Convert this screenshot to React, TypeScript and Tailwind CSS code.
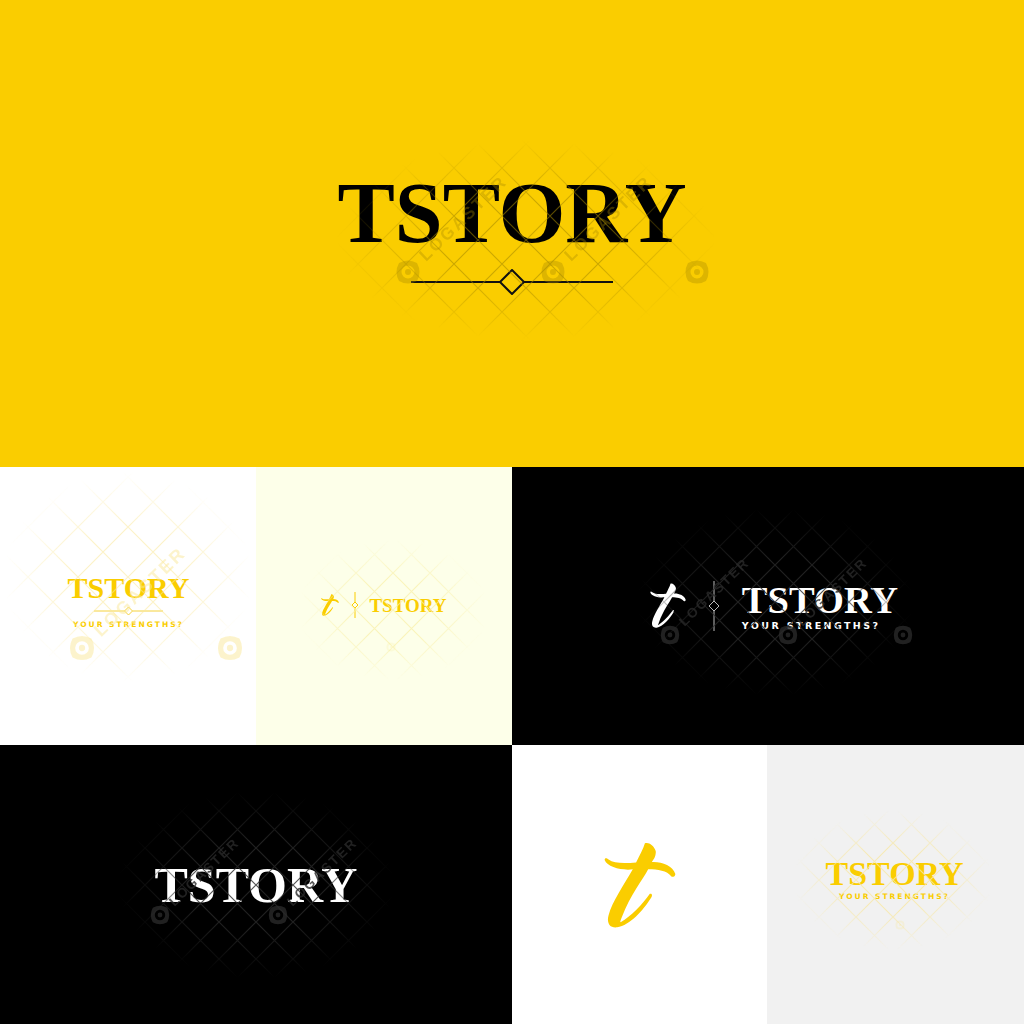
import type { ReactNode } from 'react';

const serif = "font-['Liberation_Serif',serif] font-bold leading-none whitespace-nowrap";
const tagline = "font-['DejaVu_Sans',sans-serif] font-bold leading-none whitespace-nowrap";

type Mark = { x: number; y: number; label?: boolean };

function Watermark({ id, cx, cy, rx, ry, gap, color, lineOpacity, markOpacity, marks, size = 1 }: {
  id: string; cx: number; cy: number; rx: number; ry: number; gap: number; color: string;
  lineOpacity: number; markOpacity: number; marks: Mark[]; size?: number;
}) {
  return (
    <svg className="absolute inset-0 h-full w-full pointer-events-none">
      <defs>
        <radialGradient id={`${id}-g`}>
          <stop offset="0.45" stopColor="#fff" />
          <stop offset="1" stopColor="#000" />
        </radialGradient>
        <mask id={`${id}-m`}>
          <rect x={cx - rx} y={cy - ry} width={rx * 2} height={ry * 2} fill={`url(#${id}-g)`} />
        </mask>
        <pattern id={`${id}-p`} width={gap} height={gap} patternUnits="userSpaceOnUse" patternTransform={`translate(${cx} ${cy})`}>
          <path d={`M0 0L${gap} ${gap}M${gap} 0L0 ${gap}`} stroke={color} strokeWidth="1.2" fill="none" />
        </pattern>
      </defs>
      <rect x={cx - rx} y={cy - ry} width={rx * 2} height={ry * 2} fill={`url(#${id}-p)`} mask={`url(#${id}-m)`} opacity={lineOpacity} />
      <g fill={color} opacity={markOpacity}>
        {marks.map((m) => (
          <g key={`${m.x}-${m.y}`} transform={`translate(${m.x} ${m.y}) scale(${size})`}>
            <path fillRule="evenodd" d="M-9 -9Q0 -14 9 -9Q14 0 9 9Q0 14 -9 9Q-14 0 -9 -9ZM0 -6.5A6.5 6.5 0 1 0 0 6.5A6.5 6.5 0 1 0 0 -6.5ZM0 -3A3 3 0 1 1 0 3A3 3 0 1 1 0 -3Z" />
            {m.label && (
              <text transform="translate(18 -10) rotate(-44)" fontFamily="'Liberation Sans', sans-serif" fontWeight="700" fontSize="17" letterSpacing="2.5">LOGASTER</text>
            )}
          </g>
        ))}
      </g>
    </svg>
  );
}

function Diamond({ color, width, size, stroke = 2 }: { color: string; width: number; size: number; stroke?: number }) {
  const c = width / 2;
  return (
    <svg width={width} height={size * 2 + 2} className="block">
      <path d={`M0 ${size + 1}H${c - size}M${c + size} ${size + 1}H${width}`} stroke={color} strokeWidth={stroke} />
      <path d={`M${c} 1L${c + size} ${size + 1}L${c} ${size * 2 + 1}L${c - size} ${size + 1}Z`} stroke={color} strokeWidth={stroke} fill="none" />
    </svg>
  );
}

function Divider({ color, height, size }: { color: string; height: number; size: number }) {
  const c = size + 1;
  return (
    <svg width={size * 2 + 2} height={height} className="block">
      <path d={`M${c} 0V${height / 2 - size}M${c} ${height / 2 + size}V${height}`} stroke={color} strokeWidth="1" />
      <path d={`M${c} ${height / 2 - size}L${c + size} ${height / 2}L${c} ${height / 2 + size}L${c - size} ${height / 2}Z`} stroke={color} strokeWidth="1" fill="none" />
    </svg>
  );
}

function ScriptT({ color, width, height }: { color: string; width: number; height: number }) {
  return (
    <svg width={width} height={height} viewBox="70 63 220 261" preserveAspectRatio="none" className="block">
      <path
        fill={color}
        d="M195 67C205 62 222 72 228 90C230 105 222 115 216 124C245 122 280 135 288 160C288 168 280 170 276 168C262 150 235 146 205 146C190 175 150 225 125 290C120 302 118 308 122 306C150 290 190 250 210 220C218 218 218 226 214 232C190 270 150 315 110 322C85 325 78 305 84 285C95 245 130 195 158 146C125 150 80 140 72 118C72 110 78 112 84 116C100 128 130 128 168 125C178 105 190 85 195 67Z"
      />
    </svg>
  );
}

function Cell({ className, children }: { className: string; children: ReactNode }) {
  return <div className={`relative flex items-center justify-center overflow-hidden ${className}`}>{children}</div>;
}

export default function App() {
  return (
    <div className="flex h-[1024px] w-[1024px] flex-col bg-black">
      <Cell className="h-[467px] bg-[#facd00]">
        <div className="flex flex-col items-center text-black pb-[3px]">
          <div className={`${serif} text-[86px]`}>TSTORY</div>
          <div className="mt-[13px]">
            <Diamond color="#111" width={202} size={12} />
          </div>
        </div>
        <Watermark
          id="top" cx={526} cy={240} rx={190} ry={100} gap={48} color="#a88a00" lineOpacity={0.55} markOpacity={0.35}
          marks={[{ x: 408, y: 272, label: true }, { x: 553, y: 272, label: true }, { x: 697, y: 272 }]}
        />
      </Cell>

      <div className="flex h-[278px]">
        <Cell className="w-[256px] bg-white">
          <div className="flex flex-col items-center text-[#facd00] mb-[10px] ml-[1px]">
            <div className={`${serif} text-[30px]`}>TSTORY</div>
            <div className="mt-[3px]">
              <Diamond color="#f5d23c" width={69} size={4} stroke={1} />
            </div>
            <div className={`${tagline} mt-[5px] text-[7.5px] tracking-[2px]`}>YOUR STRENGTHS?</div>
          </div>
          <Watermark
            id="white" cx={128} cy={110 + 0} rx={125} ry={105} gap={50} color="#fbe99a" lineOpacity={0.55} markOpacity={0.5} size={1.05}
            marks={[{ x: 82, y: 181, label: true }, { x: 230, y: 181 }]}
          />
        </Cell>
        <Cell className="w-[256px] bg-[#fdffe9]">
          <div className="flex items-center text-[#facd00] mt-[-2px]">
            <ScriptT color="#facd00" width={18} height={22} />
            <div className="ml-[12px] mr-[10px]">
              <Divider color="#facd00" height={26} size={3} />
            </div>
            <div className={`${serif} text-[19px]`}>TSTORY</div>
          </div>
          <Watermark
            id="cream" cx={137} cy={143} rx={95} ry={70} gap={37} color="#f9f0a8" lineOpacity={0.7} markOpacity={0.25} size={0.4}
            marks={[{ x: 135, y: 180 }]}
          />
        </Cell>
        <Cell className="w-[512px] bg-black">
          <div className="flex items-center text-white ml-[12px] mb-[1px]">
            <ScriptT color="#fff" width={36} height={45} />
            <div className="ml-[22px] mr-[22px]">
              <Divider color="#bbb" height={50} size={5} />
            </div>
            <div className="flex flex-col">
              <div className={`${serif} text-[38.5px]`}>TSTORY</div>
              <div className={`${tagline} mt-[2px] text-[9.5px] tracking-[2.4px]`}>YOUR STRENGTHS?</div>
            </div>
          </div>
          <Watermark
            id="blackA" cx={263} cy={135} rx={140} ry={95} gap={37} color="#2a2a2a" lineOpacity={0.8} markOpacity={0.8} size={0.8}
            marks={[{ x: 158, y: 168, label: true }, { x: 276, y: 168, label: true }, { x: 391, y: 168 }]}
          />
        </Cell>
      </div>

      <div className="flex h-[279px]">
        <Cell className="w-[512px] bg-black">
          <div className={`${serif} text-[50px] text-white`}>TSTORY</div>
          <Watermark
            id="blackB" cx={256} cy={140} rx={140} ry={95} gap={37} color="#2a2a2a" lineOpacity={0.8} markOpacity={0.8} size={0.8}
            marks={[{ x: 160, y: 170, label: true }, { x: 278, y: 170, label: true }]}
          />
        </Cell>
        <Cell className="w-[255px] bg-white">
          <ScriptT color="#facd00" width={72} height={86} />
        </Cell>
        <Cell className="w-[257px] bg-[#f1f1f1]">
          <div className="flex flex-col items-center text-[#facd00] mb-[11px] mr-[2px]">
            <div className={`${serif} text-[34px]`}>TSTORY</div>
            <div className={`${tagline} mt-[2px] text-[7.5px] tracking-[2px]`}>YOUR STRENGTHS?</div>
          </div>
          <Watermark
            id="gray" cx={126} cy={135} rx={100} ry={70} gap={37} color="#f7e8a8" lineOpacity={0.8} markOpacity={0.3} size={0.4}
            marks={[{ x: 133, y: 180 }]}
          />
        </Cell>
      </div>
    </div>
  );
}
